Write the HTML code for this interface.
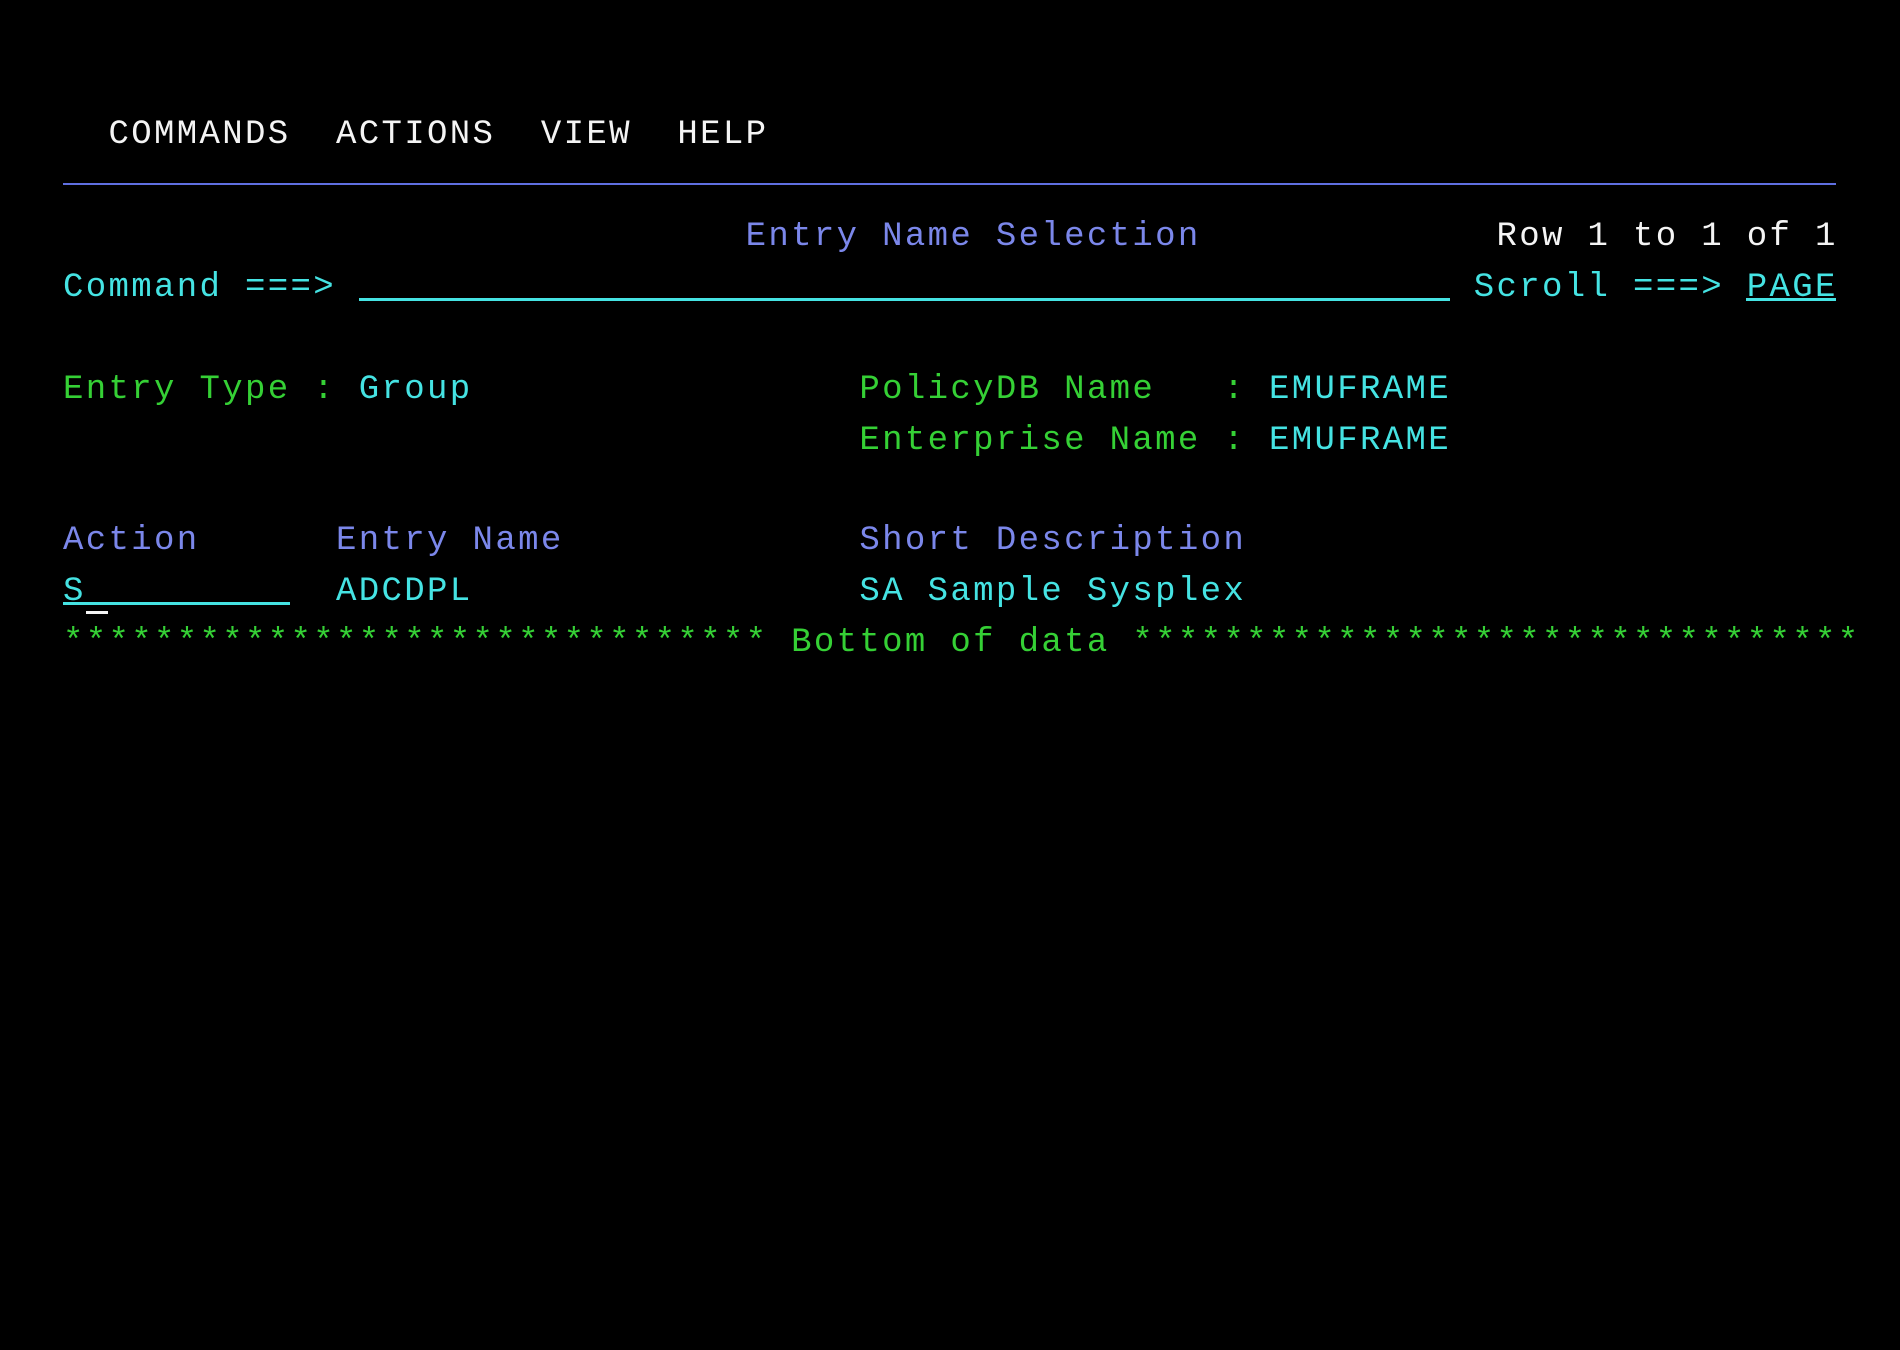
<!DOCTYPE html>
<html><head><meta charset="utf-8"><style>
html,body{margin:0;padding:0;background:#000;width:1900px;height:1350px;overflow:hidden}
.r{position:absolute;left:63px;height:51px;line-height:51px;font-family:"Liberation Mono",monospace;font-size:34px;letter-spacing:2.35px;white-space:pre;margin:0}
.w{color:#f4f4f4}.b{color:#7b87ea}.c{color:#45e3e3}.g{color:#35d035}
.u{position:absolute;height:3px}
</style></head><body>
<pre class="r w" style="top:110px">  COMMANDS  ACTIONS  VIEW  HELP</pre>
<div class="u" style="left:63px;width:1773px;top:183px;height:2px;background:#5f6fe0"></div>
<pre class="r" style="top:212px"><span class="b">                              Entry Name Selection</span><span class="w">             Row 1 to 1 of 1</span></pre>
<pre class="r c" style="top:263px">Command ===>                                                  Scroll ===> PAGE</pre>
<div class="u" style="left:359px;width:1091px;top:298px;background:#45e3e3"></div>
<div class="u" style="left:1746px;width:90px;top:298px;background:#45e3e3"></div>
<pre class="r" style="top:365px"><span class="g">Entry Type : </span><span class="c">Group</span><span class="g">                 PolicyDB Name   : </span><span class="c">EMUFRAME</span></pre>
<pre class="r" style="top:416px"><span class="g">                                   Enterprise Name : </span><span class="c">EMUFRAME</span></pre>
<pre class="r b" style="top:516px">Action      Entry Name             Short Description</pre>
<pre class="r c" style="top:567px">S           ADCDPL                 SA Sample Sysplex</pre>
<div class="u" style="left:63px;width:227px;top:602px;background:#45e3e3"></div>
<div class="u" style="left:86px;width:22px;top:611px;background:#f4f4f4"></div>
<pre class="r g" style="top:618px">******************************* Bottom of data ********************************</pre>
</body></html>
